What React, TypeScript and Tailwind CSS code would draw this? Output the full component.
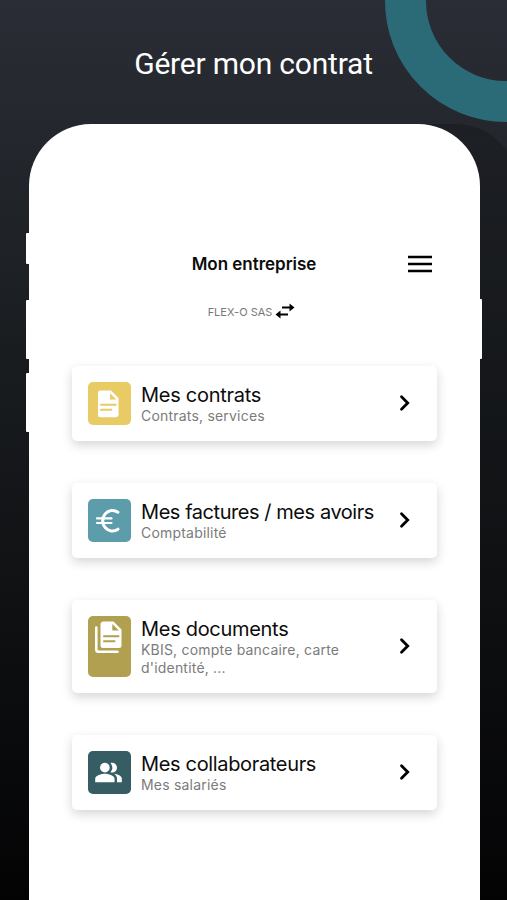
import type { ReactNode } from 'react';
import { MdPeopleAlt } from 'react-icons/md';

const FileIcon = () => (
  <svg viewBox="0 0 30 30" className="w-[30px] h-[30px]">
    <path d="M6.5 1.5h10.5l7.5 7.5v16.5a2.700 2.700 0 0 1-2.700 2.700H6.500A2.500 2.500 0 0 1 4 25.700V4a2.500 2.500 0 0 1 2.500-2.500z" fill="white" />
    <path d="M16 4.200v6.200h6.200z" fill="#e8cb64" />
    <path d="M7 15.800h14.800M7 20.800h10.500" stroke="#e8cb64" strokeWidth="2" strokeLinecap="round" />
  </svg>
);

const EuroIcon = () => (
  <svg viewBox="0 0 30 30" className="w-[30px] h-[30px]" fill="none" stroke="white" strokeWidth="3" strokeLinecap="round">
    <path d="M24 6.200A9.800 10.300 0 1 0 24 23.200" />
    <path d="M3 12.400h14.500M3 17h14.500" strokeWidth="2.200" />
  </svg>
);

const FilesIcon = () => (
  <svg viewBox="0 0 30 34" className="w-[30px] h-[34px]" fill="none">
    <path d="M2.300 7.500v22a2.200 2.200 0 0 0 2.200 2.200h19" stroke="white" strokeWidth="2.600" strokeLinecap="round" />
    <path d="M9.500 1.500h10l8 8v16a2.500 2.500 0 0 1-2.500 2.500H9a2.500 2.500 0 0 1-2.500-2.500V4.500a3 3 0 0 1 3-3z" fill="white" />
    <path d="M18.300 4v6.500h6.500z" fill="#b0a050" />
    <path d="M10 16.200h14.500M10 21.300h10.500" stroke="#b0a050" strokeWidth="2" strokeLinecap="round" />
  </svg>
);

type Entry = {
  title: string;
  text: string;
  color: string;
  height: string;
  titleSpacing: string;
  icon: ReactNode;
};

const ENTRIES: Entry[] = [
  {
    title: 'Mes contrats',
    text: 'Contrats, services',
    color: 'bg-[#e8cb64] items-center',
    height: 'h-[75px]',
    titleSpacing: 'tracking-[-0.28px]',
    icon: <FileIcon />,
  },
  {
    title: 'Mes factures / mes avoirs',
    text: 'Comptabilité',
    color: 'bg-[#5d9dab] items-center',
    height: 'h-[75px]',
    titleSpacing: 'tracking-[-0.44px]',
    icon: <EuroIcon />,
  },
  {
    title: 'Mes documents',
    text: "KBIS, compte bancaire, carte d'identité, ...",
    color: 'bg-[#b0a050] pt-[4px]',
    height: 'h-[93px]',
    titleSpacing: 'tracking-[-0.3px]',
    icon: <FilesIcon />,
  },
  {
    title: 'Mes collaborateurs',
    text: 'Mes salariés',
    color: 'bg-[#365c64] items-center',
    height: 'h-[75px]',
    titleSpacing: 'tracking-[-0.34px]',
    icon: <MdPeopleAlt className="w-[29px] h-[29px] mr-px mb-px text-white" />,
  },
];

function EntryCard({ entry }: { entry: Entry }) {
  return (
    <div className={`flex ${entry.height} p-4 rounded-[5px] bg-white shadow-[0_4px_11px_rgba(0,0,0,0.17)]`}>
      <div className={`flex justify-center w-[43px] shrink-0 rounded-[5px] ${entry.color}`}>{entry.icon}</div>
      <div className="ml-[10.5px] w-[250px]">
        <h2 className={`pt-px text-[20px] leading-[24px] text-[#0c0c0c] whitespace-nowrap ${entry.titleSpacing}`}>{entry.title}</h2>
        <p className="w-[215px] text-[14px] leading-[18px] tracking-[0.2px] text-[#7b7b7b]">{entry.text}</p>
      </div>
      <svg viewBox="0 0 12 18" className="w-[12px] h-[18px] ml-[7.5px] mb-px self-center shrink-0" fill="none" stroke="black" strokeWidth="2.8">
        <path d="M2.500 2.800L8.700 9l-6.200 6.200" strokeLinecap="round" />
      </svg>
    </div>
  );
}

export default function App() {
  return (
    <div className="relative w-[507px] h-[900px] overflow-hidden bg-linear-to-b/srgb from-[#2a2d35] via-[#191c1f] via-40% to-[#030304] font-['Inter',sans-serif]">
      {/* Phone shadow and corner ring */}
      <div className="absolute left-[62px] top-[124px] w-[456px] h-[850px] rounded-[62px] bg-linear-to-b from-black/20 to-transparent" />
      <div className="absolute left-[385px] top-[-120px] w-[242px] h-[242px] rounded-full border-[41px] border-[#2b6b78]" />

      <h1 className="h-[124px] pt-[44px] text-center text-[30px] leading-[40px] tracking-[-0.2px] text-white font-['Roboto',sans-serif]">
        Gérer mon contrat
      </h1>

      <div className="relative flex justify-center">
        <div className="flex flex-col w-[3px] pt-[109px]">
          <div className="h-[31px] rounded-l-[1px] bg-white" />
          <div className="h-[59px] mt-[36px] rounded-l-[1px] bg-white" />
          <div className="h-[59px] mt-[14px] rounded-l-[1px] bg-white" />
        </div>

        <main className="w-[451px] h-[776px] px-[43px] pt-[124px] rounded-t-[62px] bg-white">
          <header className="flex items-center h-8">
            <span className="w-[365px] pt-[2px] text-center text-[17px] font-semibold tracking-[-0.02px] text-[#0c0c0c]">Mon entreprise</span>
            <svg viewBox="0 0 24 18" className="w-6 h-[18px] -ml-[29px] shrink-0" stroke="black" strokeWidth="2.6">
              <path d="M0 2h24M0 9h24M0 16h24" />
            </svg>
          </header>
          <div className="flex items-center justify-center gap-[3px] mt-[22px] h-[18px] pr-[5px]">
            <span className="pt-[2px] text-[11px] text-[#777777]">FLEX-O SAS</span>
            <svg viewBox="0 0 20 16" className="w-5 h-4">
              <path d="M7 4.500h8M5 11.500h8" stroke="black" strokeWidth="2.200" />
              <path d="M14.500 0.500L19.500 4.500L14.500 8.500zM5.500 7.500L0.500 11.500L5.500 15.500z" fill="black" />
            </svg>
          </div>
          <div className="flex flex-col gap-[42px] mt-[46px]">
            {ENTRIES.map((entry) => (
              <EntryCard key={entry.title} entry={entry} />
            ))}
          </div>
        </main>

        <div className="w-[2px] pt-[175px]">
          <div className="h-[60px] rounded-r-[1px] bg-white" />
        </div>
      </div>
    </div>
  );
}
